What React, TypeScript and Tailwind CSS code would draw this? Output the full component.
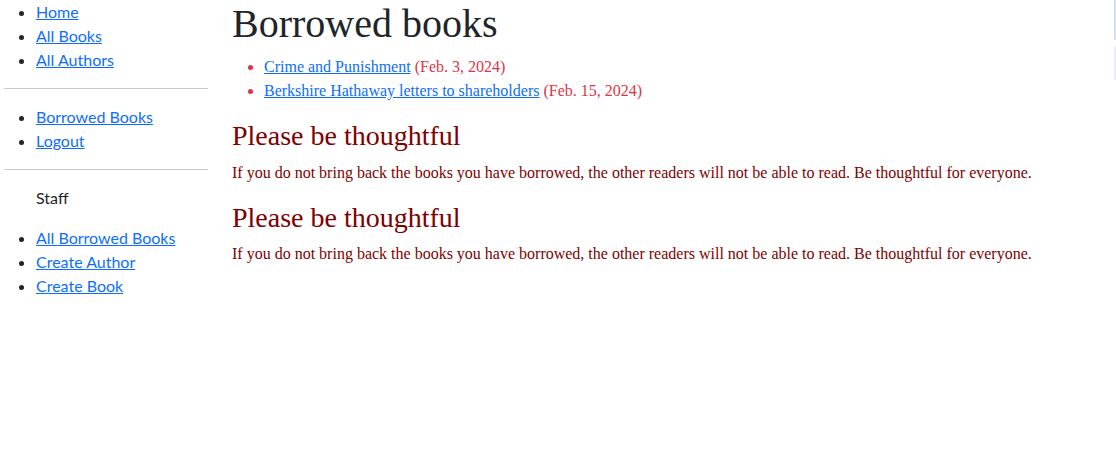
const sans = "font-['Segoe_UI','Lato',sans-serif]"

function NavList({ items }: { items: string[] }) {
  return (
    <ul className="list-disc pl-8 mb-4 text-[16px] leading-6">
      {items.map((item) => (
        <li key={item}>
          <a href="#" className="text-[#0d6efd] underline">
            {item}
          </a>
        </li>
      ))}
    </ul>
  )
}

export default function App() {
  const borrowed = [
    { title: 'Crime and Punishment', date: 'Feb. 3, 2024' },
    { title: 'Berkshire Hathaway letters to shareholders', date: 'Feb. 15, 2024' },
  ]

  return (
    <div className="flex min-h-[475px] bg-white text-[#212529]">
      <aside className={`w-[204px] ml-[4px] ${sans}`}>
        <NavList items={['Home', 'All Books', 'All Authors']} />
        <hr className="my-4 border-t border-[#c8c8c8]" />
        <NavList items={['Borrowed Books', 'Logout']} />
        <hr className="my-4 border-t border-[#c8c8c8]" />
        <p className="pl-8 mb-4 text-[16px] leading-6">Staff</p>
        <NavList items={['All Borrowed Books', 'Create Author', 'Create Book']} />
      </aside>

      <main className="flex-1 ml-[24px] font-['Liberation_Serif',serif]">
        <h1 className="text-[40px] leading-[47px] mb-2 text-[#212529]">Borrowed books</h1>
        <ul className="list-disc pl-8 mb-4 text-[16px] leading-6 text-[#dc3545] marker:text-[#dc3545]">
          {borrowed.map((b) => (
            <li key={b.title}>
              <a href="#" className="text-[#0d6efd] underline">
                {b.title}
              </a>{' '}
              ({b.date})
            </li>
          ))}
        </ul>

        {[0, 1].map((i) => (
          <section key={i} className="text-[#800000]">
            <h2 className="text-[28px] leading-[1.2] mb-2">Please be thoughtful</h2>
            <p className="text-[16px] leading-6 mb-4">
              If you do not bring back the books you have borrowed, the other readers will not be able to read. Be
              thoughtful for everyone.
            </p>
          </section>
        ))}
      </main>

      <div className="w-[2px] flex flex-col">
        <div className="h-[40px] bg-[#cfe0fc]" />
        <div className="h-[6px]" />
        <div className="h-[34px] bg-[#ebeef8]" />
      </div>
    </div>
  )
}
